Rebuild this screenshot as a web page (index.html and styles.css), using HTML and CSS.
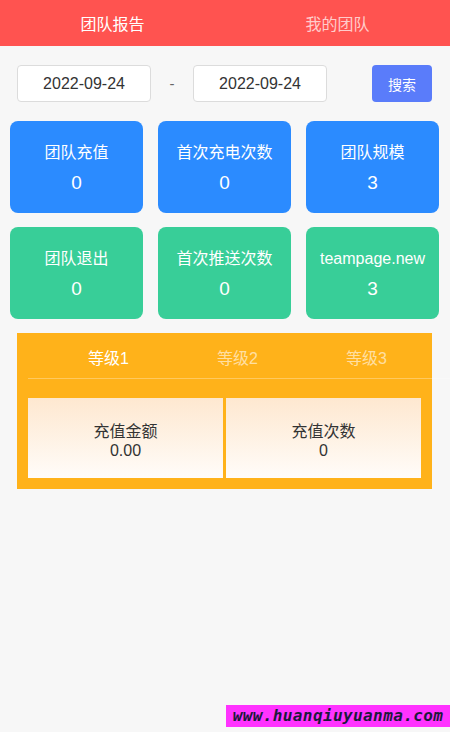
FILE: index.html
```html
<!DOCTYPE html>
<html lang="zh-CN">

<head>
    <meta charset="UTF-8">
    <meta name="viewport" content="width=device-width, initial-scale=1.0">
    <title>团队报告</title>
    <link rel="stylesheet" href="styles.css">
</head>

<body>
    <header class="top-tabs">
        <div class="top-tab active">团队报告</div>
        <div class="top-tab">我的团队</div>
    </header>

    <div class="search-bar">
        <div class="date-input">2022-09-24</div>
        <div class="date-sep">-</div>
        <div class="date-input">2022-09-24</div>
        <button class="search-btn">搜索</button>
    </div>

    <div class="stat-grid">
        <div class="stat-card blue">
            <div class="stat-label">团队充值</div>
            <div class="stat-value">0</div>
        </div>
        <div class="stat-card blue">
            <div class="stat-label">首次充电次数</div>
            <div class="stat-value">0</div>
        </div>
        <div class="stat-card blue">
            <div class="stat-label">团队规模</div>
            <div class="stat-value">3</div>
        </div>
        <div class="stat-card green">
            <div class="stat-label">团队退出</div>
            <div class="stat-value">0</div>
        </div>
        <div class="stat-card green">
            <div class="stat-label">首次推送次数</div>
            <div class="stat-value">0</div>
        </div>
        <div class="stat-card green">
            <div class="stat-label">teampage.new</div>
            <div class="stat-value">3</div>
        </div>
    </div>

    <div class="level-panel">
        <div class="level-tabs">
            <div class="level-tab active">等级1</div>
            <div class="level-tab">等级2</div>
            <div class="level-tab">等级3</div>
        </div>
        <div class="level-cells">
            <div class="level-cell">
                <div>充值金额</div>
                <div>0.00</div>
            </div>
            <div class="level-cell">
                <div>充值次数</div>
                <div>0</div>
            </div>
        </div>
    </div>

    <div class="watermark">www.huanqiuyuanma.com</div>
</body>

</html>
```

FILE: styles.css
```css
* {
    margin: 0;
    padding: 0;
    box-sizing: border-box;
}

body {
    font-family: 'Liberation Sans', 'Noto Sans CJK SC', sans-serif;
    background-color: #f7f7f7;
    color: #333;
    height: 732px;
    position: relative;
    overflow: hidden;
}

/* Top tabs */
.top-tabs {
    display: flex;
    height: 46px;
    background-color: #ff5350;
}

.top-tab {
    flex: 1;
    display: flex;
    align-items: center;
    justify-content: center;
    font-size: 16px;
    color: #ffcccb;
}

.top-tab.active {
    color: #fff;
}

/* Date search */
.search-bar {
    display: flex;
    align-items: center;
    padding: 19px 0 0 17px;
}

.date-input {
    width: 134px;
    height: 37px;
    line-height: 35px;
    background: #fff;
    border: 1px solid #dcdcdc;
    border-radius: 4px;
    text-align: center;
    font-size: 16px;
    color: #333;
}

.date-sep {
    width: 42px;
    text-align: center;
    font-size: 15px;
    color: #666;
}

.search-btn {
    margin-left: 45px;
    width: 60px;
    height: 37px;
    border: none;
    border-radius: 4px;
    background-color: #5a7cfa;
    color: #fff;
    font-family: inherit;
    font-size: 14px;
}

/* Stat cards */
.stat-grid {
    display: grid;
    grid-template-columns: repeat(3, 133px);
    column-gap: 15px;
    row-gap: 14px;
    padding-left: 10px;
    margin-top: 19px;
}

.stat-card {
    height: 92px;
    border-radius: 8px;
    color: #fff;
    text-align: center;
    padding-top: 22px;
}

.stat-card.blue {
    background-color: #2b8bff;
}

.stat-card.green {
    background-color: #38ce98;
}

.stat-label {
    font-size: 16px;
    line-height: 20px;
}

.stat-value {
    font-size: 19px;
    line-height: 20px;
    margin-top: 10px;
}

/* Level panel */
.level-panel {
    width: 415px;
    margin: 14px 0 0 17px;
    background-color: #ffb21a;
    padding: 0 11px 11px;
}

.level-tabs {
    display: flex;
    height: 46px;
    padding: 2px 0 0 16px;
    margin-right: -29px;
    border-bottom: 1px solid rgba(255, 255, 255, 0.3);
}

.level-tab {
    width: 129px;
    display: flex;
    align-items: center;
    justify-content: center;
    font-size: 16px;
    color: rgba(255, 255, 255, 0.6);
}

.level-tab.active {
    color: #fff;
}

.level-cells {
    display: grid;
    grid-template-columns: 195px 195px;
    column-gap: 3px;
    margin-top: 19px;
}

.level-cell {
    height: 80px;
    background: linear-gradient(180deg, #fee8d0, #fffcf9);
    display: flex;
    flex-direction: column;
    justify-content: center;
    align-items: center;
    padding-top: 5px;
    font-size: 16px;
    line-height: 19px;
    color: #333;
}

/* Watermark overlay */
.watermark {
    position: absolute;
    right: 0;
    bottom: 5px;
    width: 224px;
    height: 22px;
    line-height: 22px;
    background-color: #ff33ff;
    color: #1c1a3c;
    font-family: 'DejaVu Sans Mono', monospace;
    font-size: 16px;
    font-weight: bold;
    font-style: italic;
    letter-spacing: 0.4px;
    text-align: center;
}
```
